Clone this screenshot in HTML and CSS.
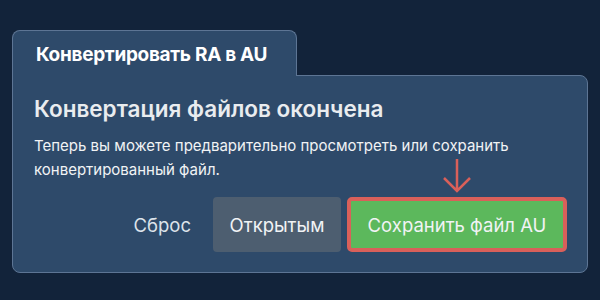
FILE: index.html
```html
<!DOCTYPE html>
<html lang="ru">
<head>
    <meta charset="UTF-8">
    <title>Конвертировать RA в AU</title>
    <link rel="stylesheet" href="styles.css">
</head>
<body>
    <div class="converter">
        <div class="tab">Конвертировать RA в AU</div>
        <div class="panel">
            <h2 class="panel-title">Конвертация файлов окончена</h2>
            <p class="panel-text">Теперь вы можете предварительно просмотреть или сохранить конвертированный файл.</p>
            <div class="actions">
                <button class="btn btn-link">Сброс</button>
                <button class="btn btn-gray">Открытым</button>
                <div class="save-wrap">
                    <!-- стрелка-подсказка над кнопкой -->
                    <svg class="hint-arrow" width="30" height="36" viewBox="0 0 30 36">
                        <path d="M15 1 V33 M2 20 L15 33 L28 20" fill="none" stroke="#d9605a" stroke-width="2.5"/>
                    </svg>
                    <button class="btn btn-green">Сохранить файл AU</button>
                </div>
            </div>
        </div>
    </div>
</body>
</html>
```

FILE: styles.css
```css
/* styles.css */
body {
    margin: 0;
    background-color: #12233a;
    font-family: Inter, "Noto Sans", sans-serif;
    overflow: hidden;
}

.converter {
    padding: 30px 0 0 12px;
    width: 576px;
}

.tab {
    position: relative;
    z-index: 1;
    width: 285px;
    height: 46px;
    box-sizing: border-box;
    margin-bottom: -1px;
    padding: 12px 0 0 23px;
    background-color: #2e4a6a;
    border: 1px solid #5d7594;
    border-bottom: none;
    border-radius: 8px 8px 0 0;
    color: #ffffff;
    font-size: 19px;
    font-weight: 700;
    letter-spacing: -0.3px;
}

.panel {
    height: 198px;
    box-sizing: border-box;
    padding: 19px 20px 20px 21px;
    background-color: #2e4a6a;
    border: 1px solid #5d7594;
    border-radius: 0 8px 8px 8px;
}

.panel-title {
    margin: 0 0 12px 0;
    color: #e9ecef;
    font-size: 22.5px;
    font-weight: 600;
}

.panel-text {
    margin: 0;
    color: #f1f3f5;
    font-size: 15px;
    line-height: 24px;
}

.actions {
    display: flex;
    justify-content: flex-end;
    align-items: center;
    gap: 6px;
    margin-top: 15px;
}

.btn {
    height: 55px;
    border: none;
    border-radius: 4px;
    font-family: inherit;
    font-size: 18.5px;
    color: #f1f3f5;
    padding: 0 16px;
}

.btn-link {
    background: none;
    padding: 0 16px 0 0;
    color: #dde3ea;
}

.btn-gray {
    width: 128px;
    background-color: #4d5e70;
}

.save-wrap {
    position: relative;
}

.btn-green {
    width: 220px;
    background-color: #5cb85c;
    border: 4.5px solid #d9605a;
    border-radius: 5px;
}

.hint-arrow {
    position: absolute;
    left: 95px;
    top: -39px;
}
```
